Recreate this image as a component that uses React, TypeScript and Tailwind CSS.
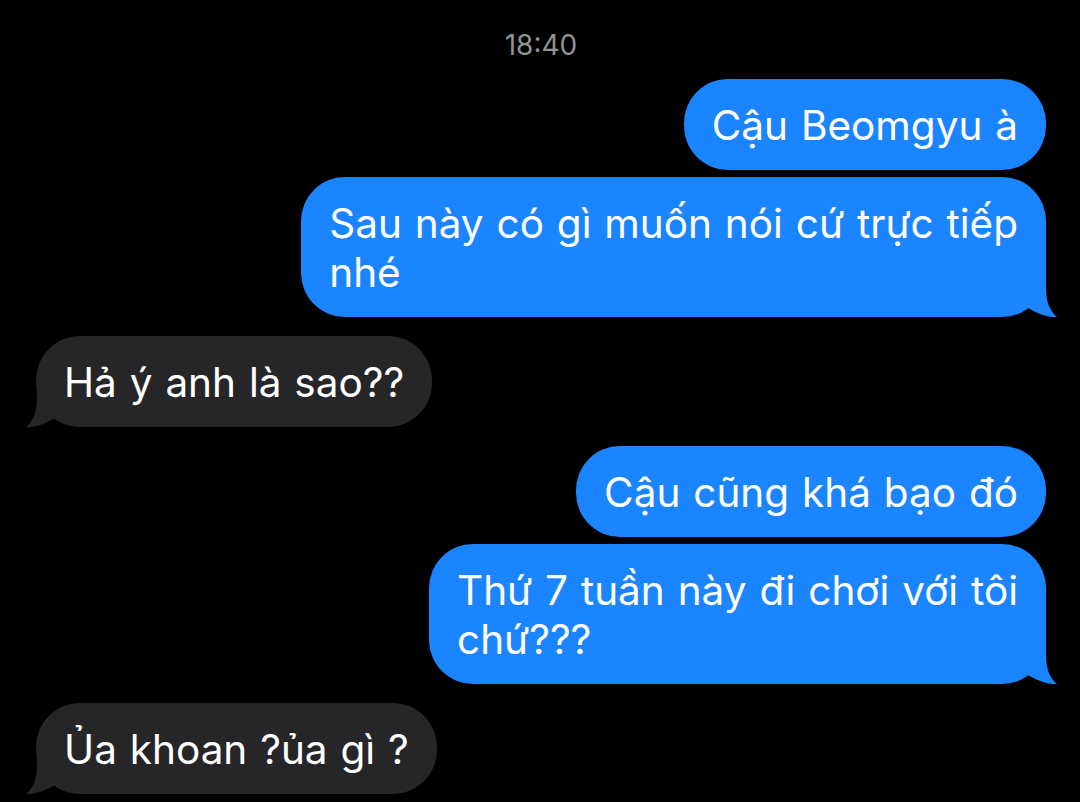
import React from 'react';

type Msg = { from: 'me' | 'them'; lines: string[]; tail?: boolean };

const messages: Msg[] = [
  { from: 'me', lines: ['Cậu Beomgyu à'] },
  { from: 'me', lines: ['Sau này có gì muốn nói cứ trực tiếp', 'nhé'], tail: true },
  { from: 'them', lines: ['Hả ý anh là sao??'], tail: true },
  { from: 'me', lines: ['Cậu cũng khá bạo đó'] },
  { from: 'me', lines: ['Thứ 7 tuần này đi chơi với tôi', 'chứ???'], tail: true },
  { from: 'them', lines: ['Ủa khoan ?ủa gì ?'], tail: true },
];

const Tail = ({ side, color }: { side: 'me' | 'them'; color: string }) =>
  side === 'me' ? (
    <svg className="absolute -right-[11px] bottom-0 w-[31px] h-[44px]" viewBox="0 0 31 44">
      <path d="M20 0 L20 14 C20 30 24 38 31 44 C24 44.6 14 42 2 35 L2 0 Z" fill={color} />
    </svg>
  ) : (
    <svg className="absolute -left-[10px] bottom-0 w-[31px] h-[44px]" viewBox="0 0 31 44">
      <path d="M11 0 L11 14 C11 30 7 38 0 44 C7 44.6 17 42 29 35 L29 0 Z" fill={color} />
    </svg>
  );

const Bubble = ({ msg }: { msg: Msg }) => {
  const mine = msg.from === 'me';
  return (
    <div className={mine ? 'flex justify-end' : 'flex justify-start'}>
      <div
        className={
          'relative rounded-[44px] px-[28px] pt-[22px] pb-[20px] text-[40.5px] leading-[49px] [word-spacing:1.5px] text-white whitespace-nowrap ' +
          (mine ? 'bg-[#1a85ff]' : 'bg-[#262629]')
        }
      >
        {msg.tail && <Tail side={msg.from} color={mine ? '#1a85ff' : '#262629'} />}
        <div className="relative">
          {msg.lines.map((l, i) => (
            <div key={i}>{l}</div>
          ))}
        </div>
      </div>
    </div>
  );
};

export default function App() {
  return (
    <div className="w-[1080px] h-[802px] overflow-hidden bg-black font-['Inter',sans-serif] pt-[28px] pl-[36px] pr-[34px]">
      <div className="text-center text-[28px] leading-[34px] text-[#919196]">18:40</div>
      <div className="mt-[17px] flex flex-col">
        {messages.map((m, i) => {
          const prev = messages[i - 1];
          const gap = !prev ? '' : prev.from === m.from ? 'mt-[7px]' : 'mt-[19px]';
          return (
            <div key={i} className={gap}>
              <Bubble msg={m} />
            </div>
          );
        })}
      </div>
    </div>
  );
}
